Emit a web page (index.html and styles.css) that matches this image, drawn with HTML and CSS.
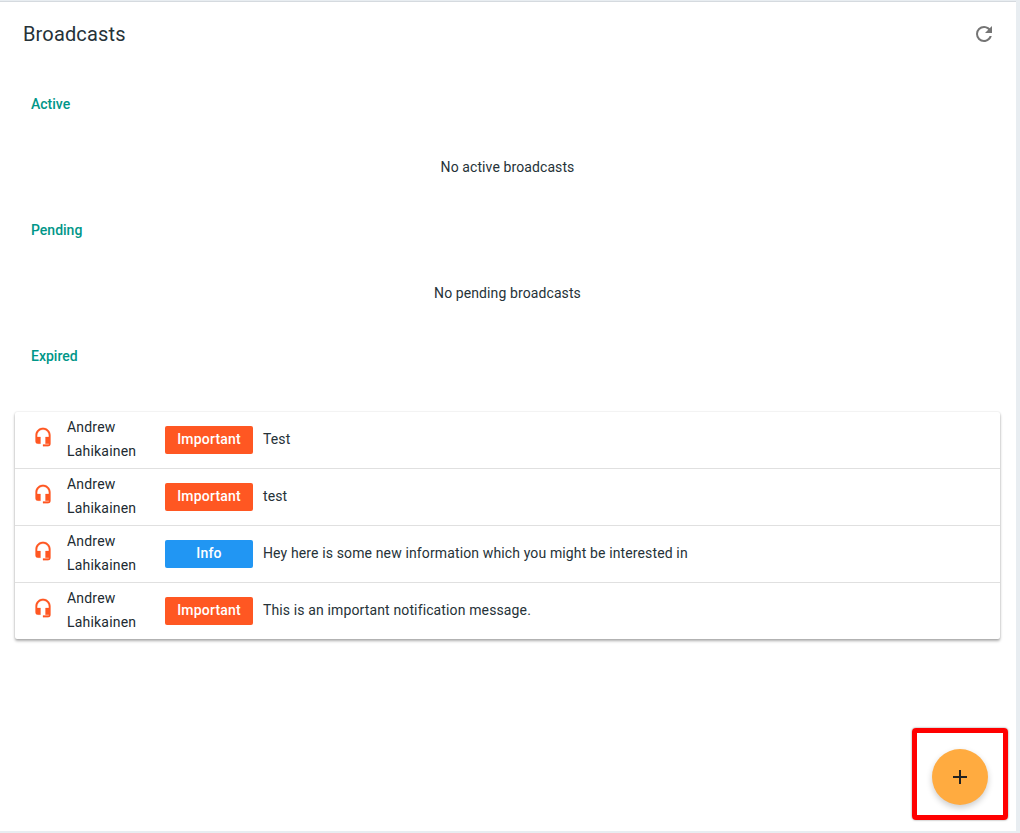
FILE: index.html
```html
<!DOCTYPE html>
<html lang="en">
<head>
<meta charset="utf-8">
<title>Broadcasts</title>
<link rel="stylesheet" href="styles.css">
</head>
<body>
<main class="panel">
  <header class="panel-head">
    <h1 class="title">Broadcasts</h1>
    <svg class="refresh" viewBox="0 0 24 24"><path d="M17.65,6.35C16.2,4.9 14.21,4 12,4A8,8 0 0,0 4,12A8,8 0 0,0 12,20C15.73,20 18.84,17.45 19.73,14H17.65C16.83,16.33 14.61,18 12,18A6,6 0 0,1 6,12A6,6 0 0,1 12,6C13.66,6 15.14,6.69 16.22,7.78L13,11H20V4L17.65,6.35Z"/></svg>
  </header>
  <h2 class="section-label">Active</h2>
  <p class="empty">No active broadcasts</p>
  <h2 class="section-label">Pending</h2>
  <p class="empty">No pending broadcasts</p>
  <h2 class="section-label">Expired</h2>
  <ul class="list">
    <li class="row">
      <svg class="headset" viewBox="0 0 24 24"><path d="M12,1C7,1 3,5 3,10V17A3,3 0 0,0 6,20H9V12H5V10A7,7 0 0,1 12,3A7,7 0 0,1 19,10V12H15V20H19V21H12V23H18A3,3 0 0,0 21,20V10C21,5 16.97,1 12,1Z"/></svg>
      <span class="name">Andrew Lahikainen</span>
      <span class="badge badge-important">Important</span>
      <span class="message">Test</span>
    </li>
    <li class="row">
      <svg class="headset" viewBox="0 0 24 24"><path d="M12,1C7,1 3,5 3,10V17A3,3 0 0,0 6,20H9V12H5V10A7,7 0 0,1 12,3A7,7 0 0,1 19,10V12H15V20H19V21H12V23H18A3,3 0 0,0 21,20V10C21,5 16.97,1 12,1Z"/></svg>
      <span class="name">Andrew Lahikainen</span>
      <span class="badge badge-important">Important</span>
      <span class="message">test</span>
    </li>
    <li class="row">
      <svg class="headset" viewBox="0 0 24 24"><path d="M12,1C7,1 3,5 3,10V17A3,3 0 0,0 6,20H9V12H5V10A7,7 0 0,1 12,3A7,7 0 0,1 19,10V12H15V20H19V21H12V23H18A3,3 0 0,0 21,20V10C21,5 16.97,1 12,1Z"/></svg>
      <span class="name">Andrew Lahikainen</span>
      <span class="badge badge-info">Info</span>
      <span class="message">Hey here is some new information which you might be interested in</span>
    </li>
    <li class="row">
      <svg class="headset" viewBox="0 0 24 24"><path d="M12,1C7,1 3,5 3,10V17A3,3 0 0,0 6,20H9V12H5V10A7,7 0 0,1 12,3A7,7 0 0,1 19,10V12H15V20H19V21H12V23H18A3,3 0 0,0 21,20V10C21,5 16.97,1 12,1Z"/></svg>
      <span class="name">Andrew Lahikainen</span>
      <span class="badge badge-important">Important</span>
      <span class="message">This is an important notification message.</span>
    </li>
  </ul>
  <div class="highlight"></div>
  <button class="fab" type="button" aria-label="Add">
    <svg class="fab-icon" viewBox="0 0 24 24"><path d="M19,13H13V19H11V13H5V11H11V5H13V11H19V13Z"/></svg>
  </button>
</main>
</body>
</html>
```
FILE: styles.css
```css
* { box-sizing: border-box; }
html, body { margin: 0; height: 100%; }
body {
  background: #e8edf1;
  font-family: Roboto, "Liberation Sans", sans-serif;
  font-size: 14px;
  color: #263238;
  overflow: hidden;
}
.panel {
  position: relative;
  width: 1016px;
  height: 830px;
  margin-top: 1px;
  background: #fff;
  border-top: 1px solid #d5dadf;
  padding: 0 16px 0 15px;
}
.panel-head {
  height: 64px;
  margin-bottom: 14px;
  display: flex;
  align-items: center;
  justify-content: space-between;
  padding: 0 4px 0 8px;
}
.title { margin: 0; font-size: 20px; font-weight: 400; line-height: 28px; letter-spacing: 0.15px; }
.refresh { width: 24px; height: 24px; fill: #757575; }
.section-label {
  margin: 0;
  padding: 0 16px;
  height: 48px;
  line-height: 48px;
  font-size: 14px;
  font-weight: 500;
  color: #009688;
}
.empty {
  margin: 0;
  height: 78px;
  line-height: 78px;
  text-align: center;
  letter-spacing: 0.1px;
}
.list {
  list-style: none;
  margin: 32px 0 0;
  padding: 0;
  background: #fff;
  border-radius: 2px;
  box-shadow: 0 2px 3px rgba(0,0,0,.32), 0 0 2px rgba(0,0,0,.14);
}
.row {
  display: flex;
  align-items: center;
  height: 57px;
  padding: 0 18px;
  border-bottom: 1px solid #e0e0e0;
}
.row:last-child { border-bottom: 0; height: 56px; }
.headset { width: 20px; height: 20px; margin: -6px 14px 0 0; fill: #ff5722; stroke: #ff5722; stroke-width: 0.3; flex: none; }
.name { width: 98px; line-height: 24px; margin-top: -3px; flex: none; letter-spacing: 0.2px; color: #212a31; }
.badge {
  width: 88px;
  height: 28px;
  line-height: 26px;
  text-align: center;
  color: #fff;
  font-weight: 500;
  border-radius: 2px;
  flex: none;
  letter-spacing: 0.2px;
}
.badge-important { background: #ff5722; }
.badge-info { background: #2196f3; }
.message { margin: -3px 0 0 10px; letter-spacing: 0.13px; }
.highlight {
  position: absolute;
  left: 912px;
  top: 726px;
  width: 96px;
  height: 92px;
  border: 5px solid #f00;
  border-radius: 4px;
  box-shadow: 0 0 2px rgba(0,0,0,.5);
}
.fab {
  position: absolute;
  left: 932px;
  top: 747px;
  width: 56px;
  height: 56px;
  padding: 0;
  border: 0;
  border-radius: 50%;
  background: #ffab40;
  box-shadow: 0 3px 6px rgba(0,0,0,.2);
  display: flex;
  align-items: center;
  justify-content: center;
}
.fab-icon { width: 24px; height: 24px; fill: #212121; }
```
